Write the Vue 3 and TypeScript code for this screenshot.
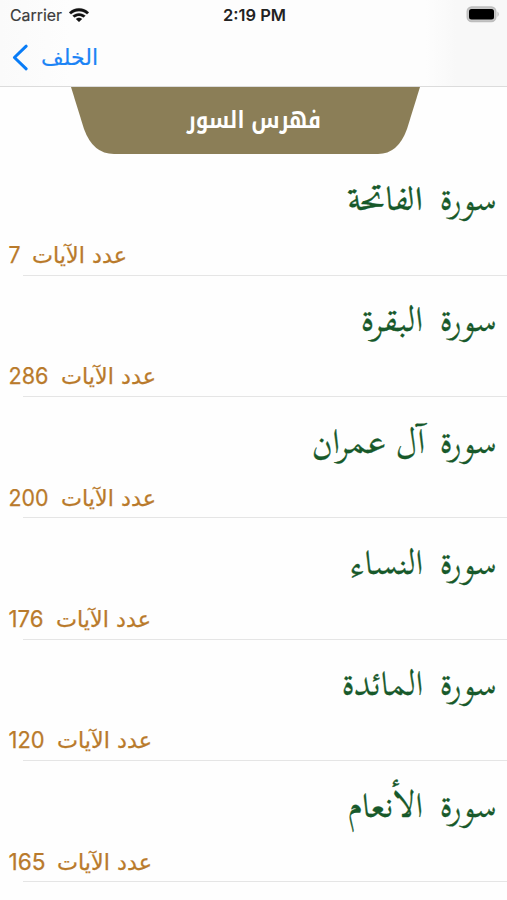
<script setup lang="ts">
interface Word {
  text: string
  x: number
  width: number
}
interface Surah {
  words: Word[]
  ligatures?: boolean
  verses: number
  digitsWidth: number
  labelStart: number
}

const surahs: Surah[] = [
  { words: [{ text: 'الفاتحة', x: 347, width: 76 }], ligatures: true, verses: 7, digitsWidth: 12, labelStart: 32 },
  { words: [{ text: 'البقرة', x: 361, width: 62 }], verses: 286, digitsWidth: 40, labelStart: 61 },
  { words: [{ text: 'آل', x: 396, width: 29 }, { text: 'عمران', x: 312, width: 74 }], verses: 200, digitsWidth: 40, labelStart: 61 },
  { words: [{ text: 'النساء', x: 351, width: 72 }], verses: 176, digitsWidth: 35, labelStart: 56 },
  { words: [{ text: 'المائدة', x: 342, width: 81 }], verses: 120, digitsWidth: 36, labelStart: 57 },
  { words: [{ text: 'الأنعام', x: 348, width: 75 }], verses: 165, digitsWidth: 37, labelStart: 57 },
]
</script>

<template>
  <main class="screen">
    <header class="top">
      <div class="status">
        <div class="carrier">
          <svg width="53" height="20"><text x="0" y="15.5" textLength="52" lengthAdjust="spacingAndGlyphs">Carrier</text></svg>
          <svg class="wifi" width="20" height="14" viewBox="0 0 20 14">
            <path d="M0 4.4C5.7-1.1 14.3-1.1 20 4.4L18 6.3C13.4 2.1 6.6 2.1 2 6.3Z" />
            <path d="M3.5 7.7C7.2 4.3 12.8 4.3 16.5 7.7L14.5 9.6C11.9 7.3 8.1 7.3 5.5 9.6Z" />
            <path d="M6.9 10.9Q10 8.4 13.1 10.9L10 13.9Z" />
          </svg>
        </div>
        <svg class="clock" width="64" height="20"><text x="0" y="15.5" textLength="63" lengthAdjust="spacingAndGlyphs">2:19 PM</text></svg>
        <svg class="battery" width="34" height="17" viewBox="0 0 34 17">
          <rect x="1.2" y="1" width="28.6" height="14.5" rx="4.5" fill="#c8c8c8" stroke="#bdbdbd" stroke-width="1.4" />
          <rect x="3" y="3" width="25" height="10.5" rx="2.5" fill="#000" />
          <path d="M31.5 5.5Q34 8.2 31.5 11Z" fill="#b9b9b9" />
        </svg>
      </div>
      <nav class="nav">
        <svg class="chevron" width="16" height="27" viewBox="0 0 16 27">
          <path d="M14.2 2.2L2.4 13.5L14.2 24.8" fill="none" stroke="#087cf7" stroke-width="3" stroke-linecap="round" stroke-linejoin="round" />
        </svg>
        <svg class="back" width="58" height="34"><text x="0" y="20.5" textLength="57" lengthAdjust="spacingAndGlyphs">الخلف</text></svg>
      </nav>
    </header>

    <svg class="banner" width="507" height="67" viewBox="0 0 507 67">
      <path d="M71 0H420L407 42Q398 67 378 67H114Q93 67 84 42Z" fill="#8b7e57" />
      <text x="187" y="40.5" textLength="134" lengthAdjust="spacingAndGlyphs">فهرس السور</text>
    </svg>

    <ul class="list">
      <li v-for="s in surahs" :key="s.verses" class="row">
        <svg class="title" width="507" height="80">
          <text x="440" y="56" textLength="57" lengthAdjust="spacingAndGlyphs">سورة</text>
          <text v-for="w in s.words" :key="w.x" :class="{ joined: s.ligatures }" :x="w.x" y="56" :textLength="w.width" lengthAdjust="spacingAndGlyphs">{{ w.text }}</text>
        </svg>
        <svg class="count" width="507" height="40">
          <text class="digits" x="8.5" y="29" :textLength="s.digitsWidth" lengthAdjust="spacingAndGlyphs">{{ s.verses }}</text>
          <text :x="s.labelStart" y="29" textLength="95" lengthAdjust="spacingAndGlyphs">عدد الآيات</text>
        </svg>
      </li>
    </ul>
  </main>
</template>

<style>
body {
  margin: 0;
  background: #fefefe;
}
</style>

<style scoped>
.screen {
  width: 507px;
  height: 900px;
  overflow: hidden;
  background: #fefefe;
}
svg {
  display: block;
  overflow: visible;
}
.top {
  box-sizing: border-box;
  height: 87px;
  background: linear-gradient(90deg, #fafafa, #fdfdfd 14%, #fdfdfd 84%, #f8f8f8 90%, #f8f8f8);
  border-bottom: 1px solid #dcdcdc;
}
.status {
  display: flex;
  justify-content: space-between;
  height: 30px;
  padding: 5px 7px 0 10px;
  box-sizing: border-box;
  font-family: Inter, sans-serif;
  font-size: 16px;
}
.carrier {
  display: flex;
  gap: 6px;
  width: 213px;
  fill: #3c3c3c;
  stroke: #3c3c3c;
  stroke-width: 0.2px;
}
.wifi {
  margin-top: 3px;
  fill: #111;
}
.clock {
  flex: none;
  margin-right: auto;
  font-weight: 600;
  fill: #222;
}
.battery {
  margin-top: 1px;
}
.nav {
  display: flex;
  gap: 13px;
  padding: 14px 0 0 12px;
}
.back {
  font-family: "DejaVu Sans", sans-serif;
  font-size: 22px;
  fill: #1c84f5;
  stroke: #1c84f5;
  stroke-width: 0.2px;
}
.banner {
  font-family: "Noto Kufi Arabic", "DejaVu Sans", sans-serif;
  font-size: 24px;
  font-weight: 700;
  fill: #fff;
}
.list {
  list-style: none;
  margin: 0;
  padding: 0;
}
.row {
  height: 121.35px;
  background: linear-gradient(#e5e5e5, #e5e5e5) 23px 120.6px / 484px 1.6px no-repeat;
}
.title {
  font-family: "Scheherazade New", "Scheherazade", "KacstBook", "Amiri", "Noto Naskh Arabic", serif;
  font-size: 34px;
  fill: #17592a;
  stroke: #17592a;
  stroke-width: 0.3px;
}
.title .joined {
  font-family: "Amiri", serif;
  font-size: 33px;
}
.count {
  font-family: "DejaVu Sans", sans-serif;
  font-size: 22px;
  fill: #b97a2b;
  stroke: #b97a2b;
  stroke-width: 0.25px;
}
.digits {
  font-family: Inter, sans-serif;
  font-size: 23px;
}
</style>
